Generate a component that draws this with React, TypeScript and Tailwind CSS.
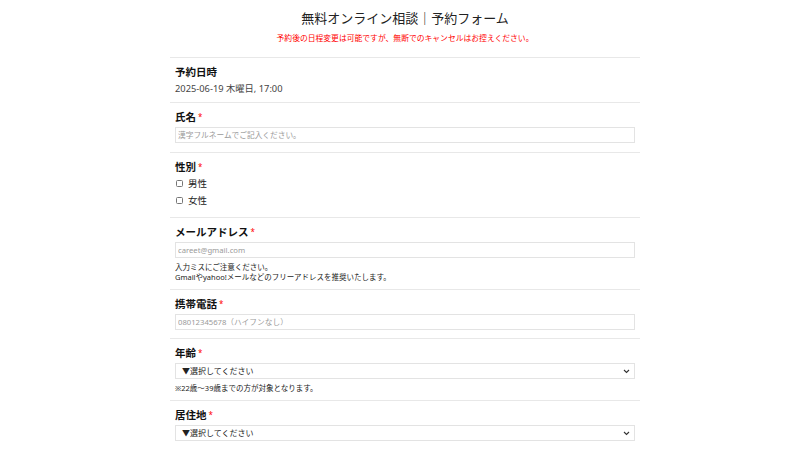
import React from "react";

const FONT = { fontFamily: '"Noto Sans", "Noto Sans CJK JP", sans-serif' };

function Req({ children }: { children: React.ReactNode }) {
  return (
    <div className="mt-[7px] h-[14px] flex items-center text-[10.5px] leading-[14px] font-bold text-[#111]">
      <span>{children}</span>
      <span className="ml-[2px] text-[8px] leading-none font-normal text-[#f00]">*</span>
    </div>
  );
}

function Chevron() {
  return (
    <svg width="7" height="5" viewBox="0 0 7 5" className="shrink-0">
      <path d="M1 1 L3.5 3.5 L6 1" fill="none" stroke="#333" strokeWidth="1.1" />
    </svg>
  );
}

function SelectBox() {
  return (
    <div className="mt-[3px] h-[16px] flex items-center justify-between border border-[#e3e3e3] bg-white pl-[6px] pr-[4px] text-[8px] leading-none text-[#222]">
      <span>▼選択してください</span>
      <Chevron />
    </div>
  );
}

function TextBox({ placeholder }: { placeholder: string }) {
  return (
    <input
      readOnly
      placeholder={placeholder}
      className="mt-[3px] block w-full h-[16px] border border-[#e3e3e3] bg-white px-[2px] text-[7.7px] placeholder:text-[#9a9a9a] outline-none"
    />
  );
}

function Check({ label }: { label: string }) {
  return (
    <div className="h-[17px] flex items-center">
      <span className="ml-[1px] w-[7px] h-[7px] border border-[#777] rounded-[1.5px] bg-white" />
      <span className="ml-[5px] text-[9.5px] leading-none text-[#222]">{label}</span>
    </div>
  );
}

export default function App() {
  return (
    <div className="w-full min-h-[450px] bg-white flex justify-center pl-[10px]" style={FONT}>
      <div className="w-[470px]">
        <div className="pt-[8px] text-center text-[13px] leading-[20px] text-[#222]">
          無料オンライン相談｜予約フォーム
        </div>
        <div className="mt-[4px] text-center text-[7.8px] leading-[12px] text-[#f00]">
          予約後の日程変更は可能ですが、無断でのキャンセルはお控えください。
        </div>
        <div className="mt-[13px]">
          <section className="border-t border-[#e8e8e8] px-[5px] pb-[5px]">
            <div className="pt-[7px] text-[10.5px] leading-[14px] font-bold text-[#111]">予約日時</div>
            <div className="mt-[2px] text-[9.3px] leading-[16px] text-[#444]">2025-06-19 木曜日, 17:00</div>
          </section>
          <section className="border-t border-[#e8e8e8] px-[5px] pb-[9px]">
            <Req>氏名</Req>
            <TextBox placeholder="漢字フルネームでご記入ください。" />
          </section>
          <section className="border-t border-[#e8e8e8] px-[5px] pb-[8px]">
            <Req>性別</Req>
            <div className="pt-[1px]">
              <Check label="男性" />
              <Check label="女性" />
            </div>
          </section>
          <section className="border-t border-[#e8e8e8] px-[5px] pb-[7px]">
            <Req>メールアドレス</Req>
            <TextBox placeholder="careet@gmail.com" />
            <div className="mt-[4px] text-[7.5px] leading-[10px] text-[#222]">
              <div>入力ミスにご注意ください。</div>
              <div>Gmailやyahoo!メールなどのフリーアドレスを推奨いたします。</div>
            </div>
          </section>
          <section className="border-t border-[#e8e8e8] px-[5px] pb-[8px]">
            <Req>携帯電話</Req>
            <TextBox placeholder="08012345678（ハイフンなし）" />
          </section>
          <section className="border-t border-[#e8e8e8] px-[5px] pb-[7px]">
            <Req>年齢</Req>
            <SelectBox />
            <div className="mt-[4px] text-[7.5px] leading-[10px] text-[#222]">※22歳〜39歳までの方が対象となります。</div>
          </section>
          <section className="border-t border-[#e8e8e8] px-[5px] pb-[8px]">
            <Req>居住地</Req>
            <SelectBox />
          </section>
        </div>
      </div>
    </div>
  );
}
